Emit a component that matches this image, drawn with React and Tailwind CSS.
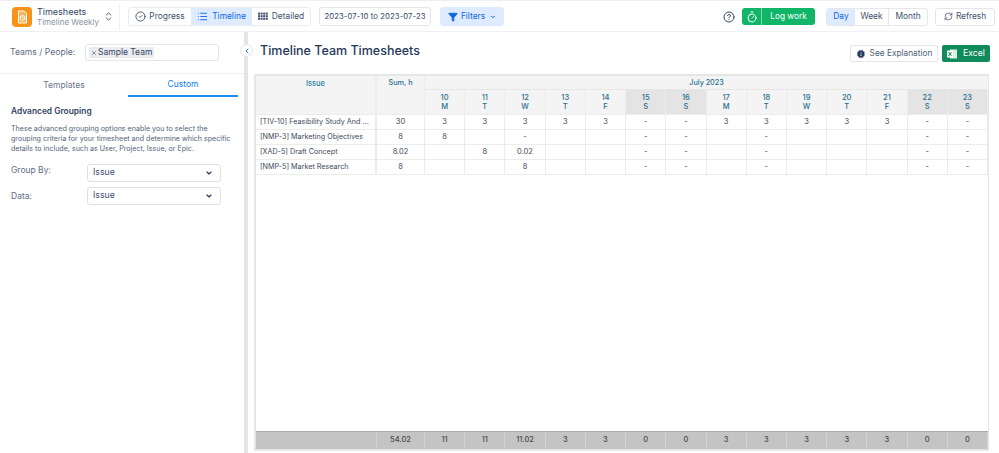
import React from "react";
import { ChevronDown, ChevronLeft, ChevronsUpDown, CircleHelp, CircleCheck, Filter, Info, List, RefreshCw, Timer, X } from "lucide-react";

const days = [["10","M"],["11","T"],["12","W"],["13","T"],["14","F"],["15","S"],["16","S"],["17","M"],["18","T"],["19","W"],["20","T"],["21","F"],["22","S"],["23","S"]];
const rows = [
  ["[TIV-10] Feasibility Study And ...","30",["3","3","3","3","3","-","-","3","3","3","3","3","-","-"]],
  ["[NMP-3] Marketing Objectives","8",["8","","-","","","-","-","","-","","","","-","-"]],
  ["[XAD-5] Draft Concept","8.02",["","8","0.02","","","-","-","","-","","","","-","-"]],
  ["[NMP-5] Market Research","8",["","","8","","","-","-","","-","","","","-","-"]],
];
const totals = ["11","11","11.02","3","3","0","0","3","3","3","3","3","0","0"];
const gridCols = "grid grid-cols-[121px_48px_repeat(14,minmax(0,1fr))]";

function Select({ label, raised }) {
  return (
    <div className="flex items-center">
      <span className={`w-[76px] shrink-0 text-[8.5px] text-[#5e6c84] ${raised ? "-mt-[6px]" : ""}`}>{label}</span>
      <div className="w-[120px] h-[16px] shrink-0 box-content border border-[#dfe1e6] rounded-[3px] flex items-center justify-between pl-[5px] pr-[7px] text-[#42526e] text-[8.7px]">
        <span>Issue</span>
        <ChevronDown size={8} strokeWidth={3.5} className="text-[#253858]" />
      </div>
    </div>
  );
}

function GridIcon() {
  const cells = [];
  for (let y = 0; y < 3; y++) for (let x = 0; x < 4; x++) cells.push(<rect key={`${x}-${y}`} x={x * 2.6} y={y * 2.6 + 0.6} width="2" height="2" fill="currentColor" />);
  return <svg width="10" height="9" viewBox="0 0 10 9">{cells}</svg>;
}

export default function App() {
  return (
    <div className="w-[999px] h-[453px] overflow-hidden bg-white flex flex-col text-[#42526e] font-['Inter','Liberation_Sans',sans-serif]">
      <header className="h-[32px] shrink-0 border-y border-[#eef0f3] flex items-center pt-px">
        <div className="w-[120px] flex items-center pl-3 h-[26px] border-r border-[#eef0f3] shrink-0">
          <div className="w-5 h-5 shrink-0 rounded-[4px] bg-[#f7931a] flex items-center justify-center">
            <svg width="13" height="14" viewBox="0 0 13 14" fill="none" stroke="#fff" strokeWidth="1">
              <path d="M2.5 1h5.5l2.5 2.5V13h-8z" fill="#f9b35c" />
              <circle cx="6.5" cy="8" r="2.4" />
              <path d="M6.5 6.8V8l1 .6" />
            </svg>
          </div>
          <div className="ml-[5px] whitespace-nowrap">
            <div className="text-[9px] text-[#344563] leading-[10px]">Timesheets</div>
            <div className="text-[8px] text-[#8993a4] leading-[10px]">Timeline Weekly</div>
          </div>
          <ChevronsUpDown size={11} className="ml-[4px] shrink-0 text-[#42526e]" />
        </div>

        <div className="ml-2 flex h-[17px] box-content border border-[#ebecf0] rounded-[3px] text-[8.4px] overflow-hidden shrink-0">
          <div className="w-[62px] flex items-center justify-center gap-[3px] text-[#42526e]"><CircleCheck size={11} />Progress</div>
          <div className="w-[61px] flex items-center justify-center gap-1 bg-[#deebff] text-[#0c66e4]"><List size={11} />Timeline</div>
          <div className="w-[58px] flex items-center justify-center gap-1 text-[#42526e]"><GridIcon />Detailed</div>
        </div>

        <div className="ml-2 w-[110px] h-[17px] shrink-0 box-content border border-[#e4e6ea] rounded-[3px] flex items-center justify-center text-[7.7px] tracking-[0.1px] text-[#344563] whitespace-nowrap">2023-07-10 to 2023-07-23</div>

        <div className="ml-[9px] w-[62px] h-[17px] shrink-0 box-content border border-[#deebff] bg-[#deebff] rounded-[3px] flex items-center justify-center text-[#0c66e4] text-[8.4px] gap-[3px]">
          <Filter size={10} fill="#0c66e4" />Filters<ChevronDown size={6} strokeWidth={4} className="ml-[2px]" />
        </div>

        <div className="flex-1" />
        <CircleHelp size={12} className="text-[#344563] mr-[7px] shrink-0" />
        <div className="w-[73px] h-[17px] shrink-0 bg-[#10b567] rounded-[3px] flex text-white text-[8.3px]">
          <div className="w-[20px] flex items-center justify-center border-r border-[#7fd9ae]"><Timer size={12} /></div>
          <div className="flex-1 flex items-center justify-center pb-px">Log work</div>
        </div>
        <div className="ml-[11px] flex h-[16px] shrink-0 box-content border border-[#e4e6ea] rounded-[3px] text-[8.4px]">
          <div className="w-[28px] flex items-center justify-center bg-[#deebff] text-[#0c66e4]">Day</div>
          <div className="w-[34px] flex items-center justify-center border-r border-[#e4e6ea]">Week</div>
          <div className="w-[38px] flex items-center justify-center">Month</div>
        </div>
        <div className="ml-[7px] mr-[4px] w-[58px] h-[16px] shrink-0 box-content border border-[#e4e6ea] rounded-[3px] flex items-center justify-center gap-[3px] text-[8.3px]">
          <RefreshCw size={9} />Refresh
        </div>
      </header>

      <div className="flex-1 flex min-h-0">
        <aside className="relative w-[248px] shrink-0 border-r-4 border-[#e4e5e7]">
          <div className="h-[42px] flex items-center pl-[10px] border-b border-[#eef0f3]">
            <span className="w-[75px] shrink-0 text-[8.6px] text-[#5e6c84] whitespace-nowrap">Teams / People:</span>
            <div className="w-[129px] h-[15px] shrink-0 box-content border border-[#e4e6ea] rounded-[3px] flex items-center pl-[3px]">
              <div className="h-[11px] bg-[#ebecf0] rounded-[1px] flex items-center px-[2px] gap-[1px] text-[8.5px] text-[#344563]">
                <X size={6} strokeWidth={3} className="text-[#5e6c84]" />Sample Team
              </div>
            </div>
          </div>
          <div className="h-[23px] flex text-[8.5px]">
            <div className="w-[128px] flex items-center justify-center text-[#6b778c]">Templates</div>
            <div className="w-[110px] flex items-center justify-center text-[#0c7fe8] border-b-2 border-[#1d8cf0]">Custom</div>
          </div>
          <div className="pl-[11px] pt-[8px] pr-[14px]">
            <div className="text-[8.4px] font-semibold text-[#344563] leading-[12px]">Advanced Grouping</div>
            <p className="mt-[7px] text-[7.1px] leading-[10px] text-[#505f79] whitespace-nowrap">
              These advanced grouping options enable you to select the<br />
              grouping criteria for your timesheet and determine which specific<br />
              details to include, such as User, Project, Issue, or Epic.
            </p>
            <div className="mt-[10px] flex flex-col gap-[5px]">
              <Select label="Group By:" raised />
              <Select label="Data:" />
            </div>
          </div>
          <div className="absolute right-[-9px] top-[12px] w-[13px] h-[13px] rounded-full bg-white border border-[#e4e6ea] flex items-center justify-center">
            <ChevronLeft size={8} strokeWidth={3} className="text-[#2684ff]" />
          </div>
        </aside>

        <main className="flex-1 min-w-0 pl-[6px] pr-[9px] flex flex-col">
          <div className="h-[42px] shrink-0 flex items-center justify-between pl-[6px]">
            <h1 className="text-[12.5px] text-[#253858] font-medium pb-[3px]">Timeline Team Timesheets</h1>
            <div className="flex gap-[4px] mt-px">
              <div className="w-[86px] h-[15px] box-content border border-[#e4e6ea] flex items-center justify-center gap-1 rounded-[2px] text-[8.3px] text-[#505f79]">
                <Info size={10} fill="#253858" stroke="#fff" />See Explanation
              </div>
              <div className="w-[48px] h-[17px] bg-[#118a5c] rounded-[2px] flex items-center justify-center gap-[6px] text-white text-[8.7px]">
                <svg width="10" height="10" viewBox="0 0 10 10"><rect x="3" y="0.5" width="7" height="9" fill="#d9f2e6" /><rect x="0" y="1.5" width="6" height="7" fill="#fff" /><path d="M1.5 3l3 4M4.5 3l-3 4" stroke="#118a5c" strokeWidth="1" /></svg>
                Excel
              </div>
            </div>
          </div>

          <div className="w-[735px] h-[377px] border-2 border-r border-[#e6e6e6] flex flex-col text-[7.5px]">
            <div className="bg-[#f4f4f4] h-[38px] shrink-0 grid grid-cols-[121px_48px_minmax(0,1fr)] text-[#1f6f8f] font-medium">
              <div className="text-center pt-[2px] text-[7.5px] border-r-2 border-[#ececec] text-[#2a7f9e]">Issue</div>
              <div className="text-center pt-[2px] text-[7.3px] border-r border-[#ececec]">Sum, h</div>
              <div className="flex flex-col">
                <div className="h-[14px] shrink-0 text-center leading-[12px] pt-[1px] text-[7.2px] border-b border-[#e6e6e6]">July 2023</div>
                <div className="grid flex-1 grid-cols-[repeat(14,minmax(0,1fr))] leading-[9px]">
                  {days.map(([d, w]) => (
                    <div key={d} className={`text-center pt-[3px] border-r border-[#ececec] ${w === "S" ? "bg-[#e4e4e4]" : ""}`}>
                      <div>{d}</div><div>{w}</div>
                    </div>
                  ))}
                </div>
              </div>
            </div>
            {rows.map(([name, sum, vals]) => (
              <div key={name} className={`${gridCols} h-[15px] shrink-0 border-t border-[#ececec] items-stretch text-[#3d4a5c] leading-[13px]`}>
                <div className="pl-[4px] border-r-2 border-[#ececec] whitespace-nowrap overflow-hidden text-[7.2px]">{name}</div>
                <div className="text-center border-r border-[#ececec]">{sum}</div>
                {vals.map((v, i) => (
                  <div key={i} className="text-center border-r border-[#ececec]">{v}</div>
                ))}
              </div>
            ))}
            <div className="border-t border-[#ececec] flex-1" />
            <div className={`${gridCols} h-[18px] shrink-0 bg-[#c4c4c4] border-t border-[#a9a9a9] text-[#4a4a4a] font-medium leading-[14px]`}>
              <div className="border-r border-[#d4d4d4] my-[1px]" />
              <div className="text-center border-r border-[#d4d4d4] my-[1px]">54.02</div>
              {totals.map((v, i) => (
                <div key={i} className="text-center border-r border-[#d4d4d4] my-[1px]">{v}</div>
              ))}
            </div>
          </div>
        </main>
      </div>
    </div>
  );
}
